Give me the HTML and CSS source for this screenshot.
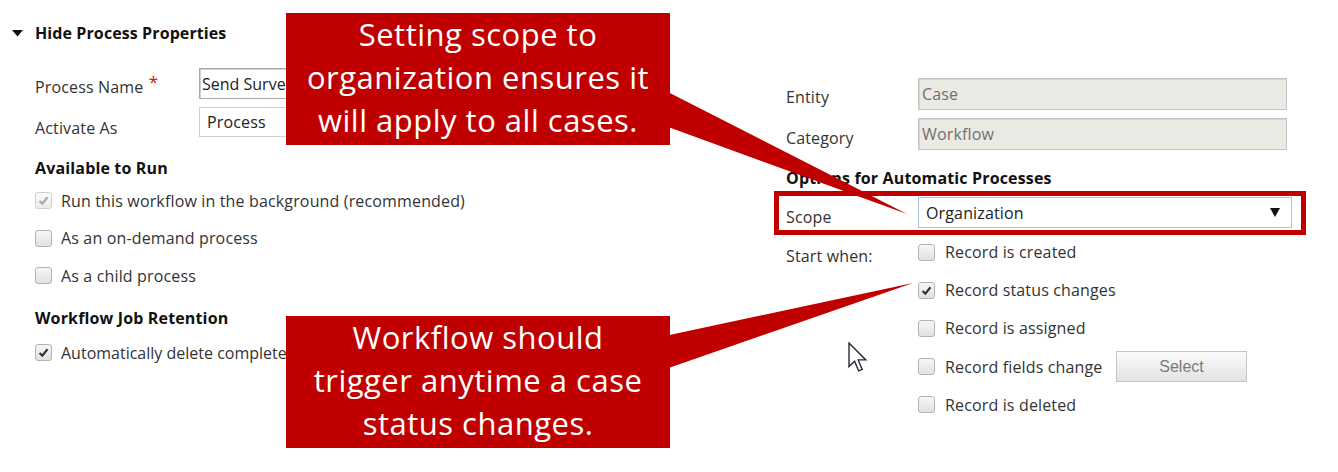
FILE: index.html
```html
<!DOCTYPE html>
<html lang="en">
<head>
<meta charset="utf-8">
<title>Process Properties</title>
<link rel="stylesheet" href="styles.css">
</head>
<body>
<div class="page">
  <div class="left">
    <div class="sec-head">
      <svg class="tri" width="11" height="7" viewBox="0 0 11 7"><path d="M0 0 H11 L5.5 6.5 Z" fill="#111"/></svg>
      <span>Hide Process Properties</span>
    </div>

    <div class="frow frow-name">
      <div class="flabel">Process Name <span class="req">*</span></div>
      <div class="field field-text">Send Surve</div>
    </div>
    <div class="frow frow-act">
      <div class="flabel">Activate As</div>
      <div class="field field-select">Process</div>
    </div>

    <div class="group-head gh-run">Available to Run</div>
    <div class="cb-row">
      <span class="cb cb-disabled"><svg viewBox="0 0 17 17"><path d="M4 9 L7.2 12 L13 4.8" fill="none" stroke="#a8a8a8" stroke-width="2.4"/></svg></span>
      <span class="cb-text">Run this workflow in the background (recommended)</span>
    </div>
    <div class="cb-row">
      <span class="cb"></span>
      <span class="cb-text">As an on-demand process</span>
    </div>
    <div class="cb-row">
      <span class="cb"></span>
      <span class="cb-text">As a child process</span>
    </div>

    <div class="group-head gh-ret">Workflow Job Retention</div>
    <div class="cb-row">
      <span class="cb"><svg viewBox="0 0 17 17"><path d="M4 9 L7.2 12 L13 4.8" fill="none" stroke="#333" stroke-width="2.4"/></svg></span>
      <span class="cb-text cb-text-tight">Automatically delete complete</span>
    </div>
  </div>

  <div class="right">
    <div class="rrow rrow-entity">
      <div class="rlabel">Entity</div>
      <div class="field field-ro">Case</div>
    </div>
    <div class="rrow rrow-cat">
      <div class="rlabel">Category</div>
      <div class="field field-ro">Workflow</div>
    </div>

    <div class="group-head gh-opt">Options for Automatic Processes</div>

    <div class="rrow rrow-scope">
      <div class="rlabel">Scope</div>
      <div class="field field-drop">
        <span>Organization</span>
        <svg class="drop-arrow" width="10" height="9" viewBox="0 0 10 9"><path d="M0 0 H10 L5 9 Z" fill="#111"/></svg>
      </div>
    </div>

    <div class="start">
      <div class="rlabel start-label">Start when:</div>
      <div class="start-list">
        <div class="cb-row r-row">
          <span class="cb"></span>
          <span class="cb-text">Record is created</span>
        </div>
        <div class="cb-row r-row">
          <span class="cb"><svg viewBox="0 0 17 17"><path d="M4 9 L7.2 12 L13 4.8" fill="none" stroke="#333" stroke-width="2.4"/></svg></span>
          <span class="cb-text">Record status changes</span>
        </div>
        <div class="cb-row r-row">
          <span class="cb"></span>
          <span class="cb-text">Record is assigned</span>
        </div>
        <div class="cb-row r-row">
          <span class="cb"></span>
          <span class="cb-text cb-text-fixed">Record fields change</span>
          <span class="btn">Select</span>
        </div>
        <div class="cb-row r-row">
          <span class="cb"></span>
          <span class="cb-text">Record is deleted</span>
        </div>
      </div>
    </div>
  </div>
</div>

<!-- annotation overlays -->
<div class="highlight"></div>
<svg class="tails" width="1338" height="472" viewBox="0 0 1338 472">
  <polygon points="660,88 907,214 660,124" fill="#c00000"/>
  <polygon points="660,337 913,283 660,371" fill="#c00000"/>
</svg>
<div class="callout callout-top">Setting scope to<br>organization ensures it<br>will apply to all cases.</div>
<div class="callout callout-bottom">Workflow should<br>trigger anytime a case<br>status changes.</div>
<svg class="cursor" width="22" height="32" viewBox="0 0 22 32">
  <path d="M1 1 L1 24.5 L6.6 19.2 L10.6 28.8 L14.2 27.3 L10.2 17.9 L17.8 17.9 Z" fill="#fff" stroke="#2a2a33" stroke-width="1.4" stroke-linejoin="miter"/>
</svg>
</body>
</html>
```

FILE: styles.css
```css
html, body {
  margin: 0;
  padding: 0;
  background: #ffffff;
}

body {
  width: 1338px;
  height: 472px;
  overflow: hidden;
  position: relative;
  font-family: "Open Sans", "Noto Sans", sans-serif;
  font-size: 16px;
  letter-spacing: 0.15px;
  color: #333333;
}

.page {
  display: flex;
}

/* ---------- left column ---------- */
.left {
  width: 786px;
  flex: none;
  padding-top: 23px;
  box-sizing: border-box;
}

.sec-head {
  display: flex;
  align-items: center;
  height: 20px;
  padding-left: 12px;
  font-weight: 700;
  font-size: 16px;
  color: #111;
  letter-spacing: 0.1px;
}

.sec-head .tri {
  margin-right: 12px;
  flex: none;
}

.frow {
  display: flex;
  padding-left: 35px;
}

.frow-name {
  margin-top: 25px;
}

.frow-act {
  margin-top: 8px;
}

.flabel {
  width: 164px;
  flex: none;
  line-height: 20px;
  color: #333;
}

.frow-name .flabel {
  padding-top: 9px;
}

.frow-act .flabel {
  padding-top: 11px;
}

.req {
  color: #d01010;
  font-size: 17px;
  position: relative;
  top: -5px;
  margin-left: 1px;
}

.field {
  box-sizing: border-box;
  display: flex;
  align-items: center;
  white-space: nowrap;
  overflow: hidden;
}

.field-text {
  width: 93px;
  height: 31px;
  border: 1px solid #a9a9a9;
  border-right: none;
  box-shadow: inset 1px 1px 0 #d0d0d0;
  padding-left: 2px;
  color: #222;
  letter-spacing: 0;
}

.field-select {
  width: 93px;
  height: 30px;
  border: 1px solid #cfcfcf;
  border-right: none;
  padding-left: 7px;
  color: #222;
}

.group-head {
  font-weight: 700;
  font-size: 16px;
  color: #111;
  line-height: 20px;
  height: 20px;
  letter-spacing: 0.15px;
}

.left .group-head {
  padding-left: 35px;
}

.gh-run {
  margin-top: 20px;
}

.gh-ret {
  margin-top: 13.5px;
}

.cb-row {
  display: flex;
  align-items: center;
  height: 37.5px;
}

.left .cb-row {
  padding-left: 35px;
}

.gh-run + .cb-row {
  margin-top: 4px;
}

.gh-ret + .cb-row {
  margin-top: 6px;
}

.cb {
  width: 17px;
  height: 17px;
  flex: none;
  box-sizing: border-box;
  border: 1px solid #b3b3b3;
  border-radius: 3px;
  background: linear-gradient(#f6f6f6, #e1e1e1);
  margin-right: 9px;
  display: flex;
}

.cb svg {
  width: 15px;
  height: 15px;
}

.cb-disabled {
  border-color: #d0d0d0;
  background: linear-gradient(#fafafa, #ececec);
}

.cb-text {
  white-space: nowrap;
  color: #333;
}

.cb-text-tight {
  letter-spacing: 0;
}

/* ---------- right column ---------- */
.right {
  flex: none;
  width: 552px;
  padding-top: 78px;
  box-sizing: border-box;
}

.rrow {
  display: flex;
}

.rrow-cat {
  margin-top: 8px;
}

.rrow-scope {
  margin-top: 9px;
}

.rlabel {
  width: 132px;
  flex: none;
  line-height: 20px;
  color: #333;
}

.rrow-entity .rlabel {
  padding-top: 9px;
}

.rrow-cat .rlabel {
  padding-top: 10px;
}

.rrow-scope .rlabel {
  padding-top: 10px;
}

.field-ro {
  width: 369px;
  height: 32px;
  background: #ebe9e3;
  border: 1px solid #c3c3c3;
  box-shadow: inset 1px 1px 0 #d6d4cf;
  padding-left: 3px;
  color: #707070;
}

.gh-opt {
  margin-top: 18px;
}

.field-drop {
  width: 374px;
  height: 31px;
  border: 1px solid #a9c2e8;
  background: #fff;
  padding-left: 7px;
  padding-right: 11px;
  justify-content: space-between;
  color: #222;
}

.start {
  display: flex;
  margin-top: 5px;
}

.start-label {
  padding-top: 13px;
}

.r-row {
  height: 38.2px;
}

.r-row .cb {
  margin-right: 10px;
}

.cb-text-fixed {
  width: 171px;
}

.btn {
  box-sizing: border-box;
  width: 131px;
  height: 31px;
  border: 1px solid #c6c6c6;
  background: linear-gradient(#fbfbfb, #e3e3e3);
  display: flex;
  align-items: center;
  justify-content: center;
  font-family: "Liberation Sans", Arial, sans-serif;
  font-size: 16px;
  letter-spacing: 0;
  color: #7a7a7a;
}

/* ---------- overlays ---------- */
.highlight {
  position: absolute;
  left: 774px;
  top: 191px;
  width: 532px;
  height: 44px;
  border: 5px solid #c00000;
  box-sizing: border-box;
}

.tails {
  position: absolute;
  left: 0;
  top: 0;
}

.callout {
  position: absolute;
  left: 286px;
  width: 384px;
  background: #c00000;
  color: #ffffff;
  text-align: center;
  font-family: "Open Sans", "Noto Sans", sans-serif;
  font-size: 31px;
  line-height: 43px;
  box-sizing: border-box;
  letter-spacing: 0.5px;
}

.callout-top {
  top: 13px;
  height: 132px;
}

.callout-bottom {
  top: 316px;
  height: 132px;
}

.cursor {
  position: absolute;
  left: 848px;
  top: 342px;
}
```
